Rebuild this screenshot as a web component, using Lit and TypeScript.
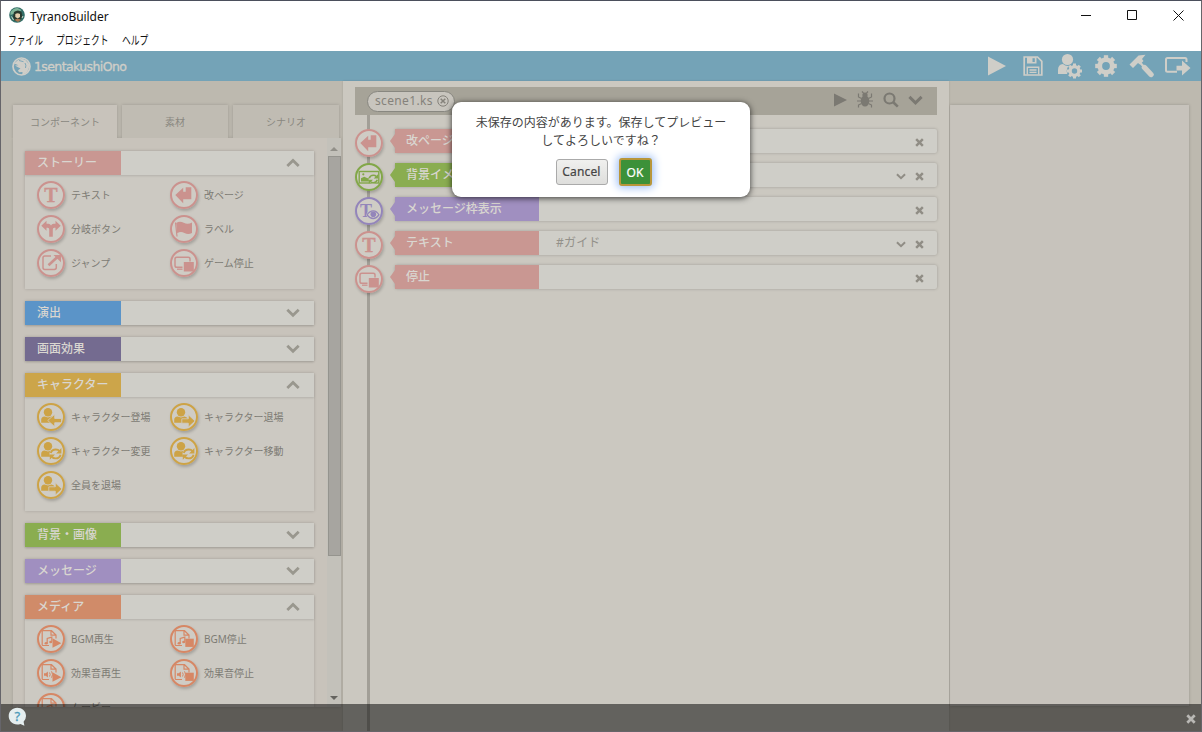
import { LitElement, html, css, svg, nothing } from "lit";
import { customElement, property } from "lit/decorators.js";
import { classMap } from "lit/directives/class-map.js";

const person = svg`<circle cx="11" cy="9.2" r="4.2" fill="currentColor"/><path d="M4.2 19.8v-3q0-3 3.4-3.4l3.4 1.2 3.4-1.2q2.600.3 3.200 2.200v4.200z" fill="currentColor"/>`;
const paper = svg`<path d="M12 20.500H6q-.8 0-.8-.8V6.500q0-.8.8-.8h8.500l4.500 4.300v3.500M14 5.700v4.500h5" fill="none" stroke="currentColor" stroke-width="1.200"/>`;
const note = svg`<path d="M10.200 18.300v-4.800l4.600-1.400v4.500" fill="none" stroke="currentColor" stroke-width="1.200"/><ellipse cx="9.200" cy="18.300" rx="1.600" ry="1.300" fill="currentColor"/><ellipse cx="13.700" cy="17" rx="1.500" ry="1.200" fill="currentColor"/>`;
const speaker = svg`<path d="M7 14.200h1.700l2.200-1.800v6.200l-2.200-1.800H7z" fill="currentColor"/><path d="M12.500 13.500q1.400 2 0 4M14.500 12.300q2.200 3.200 0 6.400" fill="none" stroke="currentColor" stroke-width="1"/>`;
const playMark = svg`<path d="M15.500 13.300l8.800 4.900-8.800 4.600z" fill="currentColor"/>`;
const stopMark = svg`<path d="M15.300 13.700h8.500v8.200h-8.500z" fill="currentColor"/>`;
const cycle = svg`<circle cx="18.500" cy="16.800" r="6" fill="var(--disc)"/><path d="M13.800 16q1-3.500 5-3.500 2.500 0 3.800 1.800M23.600 17.700q-1 3.700-5 3.700-2.500 0-3.800-1.800" fill="none" stroke="currentColor" stroke-width="1.900"/><path d="M24.400 11v5.400h-5.300zM12.800 22.700v-5.300h5.200z" fill="currentColor"/>`;

const glyphs: Record<string, unknown> = {
  text: svg`<text x="14" y="20.600" text-anchor="middle" font-family="Liberation Serif, serif" font-weight="bold" font-size="20" fill="currentColor" stroke="currentColor" stroke-width=".4">T</text>`,
  enter: svg`<path d="M5.300 14l7.900-7.300v4h2.500V6.300h5.600v12h-8.100v4z" fill="currentColor"/>`,
  branch: svg`<path d="M4.300 10.800l5.200-5v3h2q1.700 0 2.500 1.600.8-1.600 2.500-1.600h2v-3l5.200 5-5.200 5v-3h-1.300q-1.400 0-1.400 1.600v7.300h-3.600v-7.300q0-1.600-1.400-1.600H9.500v3z" fill="currentColor"/>`,
  flag: svg`<path d="M5.500 7.500l1.500 14" stroke="currentColor" stroke-width="1.200"/><path d="M6.200 8q3.500-2.500 7.500-.3t8.300-.2V18q-3.800 2-7.600 0T7.200 18.300z" fill="currentColor"/>`,
  jump: svg`<path d="M14 7H7.800Q6 7 6 8.800v9.700q0 2 1.900 2h9.400q2 0 2-1.900V15" fill="none" stroke="currentColor" stroke-width="1.500"/><path d="M11.500 16.200L20.400 8" stroke="currentColor" stroke-width="2.600"/><path d="M16.500 6H24v7.300z" fill="currentColor"/>`,
  halt: svg`<path d="M12.500 18.300H6.800q-1.800 0-1.800-1.800V10q0-1.700 1.800-1.700h11.400Q20 8.300 20 10v2.500" fill="none" stroke="currentColor" stroke-width="1.500"/><path d="M7 20.200h5.500" stroke="currentColor" stroke-width="1.300"/><path d="M13.800 13h10v9.500h-10z" fill="currentColor"/>`,
  enterChar: svg`${person}<path d="M10.700 17.500l7-6.200v4.200h6.800v4.200h-6.800v4z" fill="currentColor" stroke="var(--disc)" stroke-width=".8"/>`,
  leaveChar: svg`${person}<path d="M25 18l-6.700-6.200v4h-6.500v4.400h6.500v4z" fill="currentColor" stroke="var(--disc)" stroke-width=".8"/>`,
  swapChar: svg`${person}${cycle}`,
  bgmPlay: svg`${paper}${note}${playMark}`,
  bgmStop: svg`${paper}${note}${stopMark}`,
  sePlay: svg`${paper}${speaker}${playMark}`,
  seStop: svg`${paper}${speaker}${stopMark}`,
  image: svg`<rect x="4.200" y="8.500" width="19.600" height="11.500" fill="none" stroke="currentColor" stroke-width="1.400"/><path d="M6 18.500v-3.300l3.200-1.500 3.400 1.500 1.900-1v4.300z" fill="currentColor"/><circle cx="8.300" cy="11.300" r="1.100" fill="currentColor"/><circle cx="18.300" cy="16" r="4.700" fill="var(--disc)"/><path d="M14.300 15.300q.8-3 4-3 2 0 3 1.200M22.300 16.800q-.8 3-4 3-2 0-3-1.200" fill="none" stroke="currentColor" stroke-width="1.500"/><path d="M23 11.300v4.300h-4.300zM13.800 20.800v-4.100h4.200z" fill="currentColor"/>`,
  frame: svg`<text x="11" y="19.600" text-anchor="middle" font-family="Liberation Serif, serif" font-weight="bold" font-size="18" fill="currentColor">T</text><path d="M10.800 18q3-5.200 7.200-5.200t7 5.200q-2.800 4.500-7 4.500T10.800 18z" fill="var(--disc)"/><path d="M12 17.800q2.700-4 6.200-4t5.700 4q-2.500 3.700-5.700 3.700t-6.200-3.700z" fill="none" stroke="currentColor" stroke-width="1.300"/><circle cx="18.300" cy="17.200" r="2.800" fill="currentColor"/>`,
};

const gearPath = (cx: number, cy: number, r: number) => svg`<circle cx=${cx} cy=${cy} r=${r * 0.58} fill="none" stroke="currentColor" stroke-width=${r * 0.44}/>
  ${[0, 45, 90, 135, 180, 225, 270, 315].map((a) => svg`<rect x=${cx - r * 0.2} y=${cy - r} width=${r * 0.4} height=${r * 0.34} fill="currentColor" transform="rotate(${a} ${cx} ${cy})"/>`)}`;

@customElement("disc-icon")
class DiscIcon extends LitElement {
  @property() name = "text";
  static styles = css`
    :host { display: block; width: 28px; height: 28px; border-radius: 50%; flex: none; box-shadow: 1px 2px 3px rgba(0,0,0,.2); --disc: #cfccc5; }
    svg { display: block; width: 28px; height: 28px; }
  `;
  render() {
    return html`<svg viewBox="0 0 28 28"><circle cx="14" cy="14" r="13" fill="var(--disc)" stroke="currentColor" stroke-width="2"/>${glyphs[this.name]}</svg>`;
  }
}

@customElement("chevron-mark")
class ChevronMark extends LitElement {
  @property({ type: Boolean }) up = false;
  @property({ type: Number }) size = 14;
  static styles = css`:host { display: block; } svg { display: block; }`;
  render() {
    return html`<svg width=${this.size} height=${this.size * 0.7} viewBox="0 0 14 10"><path d=${this.up ? "M1.200 8.200L7 2.500l5.800 5.700" : "M1.200 1.800L7 7.500l5.800-5.700"} fill="none" stroke="currentColor" stroke-width="2.800"/></svg>`;
  }
}

const groups = [
  { name: "ストーリー", tone: "pink", items: [["text", "テキスト"], ["enter", "改ページ"], ["branch", "分岐ボタン"], ["flag", "ラベル"], ["jump", "ジャンプ"], ["halt", "ゲーム停止"]] },
  { name: "演出", tone: "blue", items: [] },
  { name: "画面効果", tone: "indigo", items: [] },
  { name: "キャラクター", tone: "gold", items: [["enterChar", "キャラクター登場"], ["leaveChar", "キャラクター退場"], ["swapChar", "キャラクター変更"], ["swapChar", "キャラクター移動"], ["leaveChar", "全員を退場"]] },
  { name: "背景・画像", tone: "green", items: [] },
  { name: "メッセージ", tone: "violet", items: [] },
  { name: "メディア", tone: "orange", items: [["bgmPlay", "BGM再生"], ["bgmStop", "BGM停止"], ["sePlay", "効果音再生"], ["seStop", "効果音停止"], ["bgmPlay", "ムービー"]] },
];

const steps = [
  { icon: "enter", name: "改ページ", tone: "pink", note: "", more: false },
  { icon: "image", name: "背景イメージ", tone: "green", note: "", more: true },
  { icon: "frame", name: "メッセージ枠表示", tone: "violet", note: "", more: false },
  { icon: "text", name: "テキスト", tone: "pink", note: "#ガイド", more: true },
  { icon: "halt", name: "停止", tone: "pink", note: "", more: false },
];

const cross = (s: number) => html`<svg width=${s} height=${s} viewBox="0 0 10 10"><path d="M1.300 1.300l7.400 7.400M8.700 1.300L1.300 8.700" stroke="currentColor" stroke-width="2.700"/></svg>`;

@customElement("app-root")
class AppRoot extends LitElement {
  static styles = css`
    :host { display: block; width: 1202px; height: 732px; overflow: hidden; font-family: "Noto Sans", "Noto Sans CJK JP", sans-serif; }
    * { box-sizing: border-box; }
    .window { position: relative; width: 1202px; height: 732px; border: 1px solid #66656a; border-top-color: #4b4f5c; display: flex; flex-direction: column; background: #bdb9af; overflow: hidden; }
    svg { display: block; flex: none; }
    .title { height: 29px; background: #fff; display: flex; align-items: center; padding-left: 8px; flex: none; color: #111; }
    .title svg { margin-bottom: 1px; }
    .title .name { font-size: 12px; margin-left: 5px; letter-spacing: -.05px; flex: 1; padding-top: 1px; }
    .controls { display: flex; }
    .controls span { width: 46px; display: flex; justify-content: center; align-items: center; }
    .menu { height: 21px; background: #fff; display: flex; flex: none; padding-left: 7px; font: 12px/20px "Noto Sans CJK JP", sans-serif; color: #111; }
    .menu span { width: 48px; white-space: nowrap; }
    .menu span:nth-child(2) { width: 66px; }
    .menu b { display: inline-block; font-weight: 400; transform: scaleX(.73); transform-origin: 0 50%; }
    .head { height: 30px; background: #74a3b7; color: #cfcec8; display: flex; align-items: center; flex: none; padding: 0 5px 0 11px; }
    .head .project { font: 500 12.5px "DejaVu Sans", sans-serif; -webkit-text-stroke: .35px; flex: 1; margin-left: 3px; letter-spacing: -.6px; }
    .head .tool { width: 36.2px; display: flex; justify-content: center; }
    .main { flex: 1; min-height: 0; display: flex; }
    .side { width: 342px; padding: 24px 2px 24px 12px; display: flex; flex-direction: column; }
    .tabs { display: flex; gap: 5px; height: 33px; flex: none; font: 10px/33px "Noto Sans CJK JP", sans-serif; color: #8a8881; text-align: center; }
    .tabs span { width: 106px; background: #c0bcb3; box-shadow: 0 0 3px rgba(0,0,0,.18); clip-path: inset(-4px -4px 0 -4px); }
    .tabs .on { width: 104px; background: #c8c3bb; }
    .panel { flex: 1; min-height: 0; background: #c8c3bb; display: flex; box-shadow: 0 0 3px rgba(0,0,0,.15); }
    .groups { width: 314px; padding: 13px 13px 0 12px; display: flex; flex-direction: column; gap: 12px; overflow: hidden; }
    .group { box-shadow: 0 0 3px rgba(0,0,0,.17); background: #ccc9c2; flex: none; }
    .bar { height: 24px; display: flex; align-items: center; background: #cfcec8; box-shadow: 0 1px 2px rgba(0,0,0,.12); color: #99978e; }
    .bar .label { width: 96px; height: 24px; }
    .bar chevron-mark { margin: 0 14px 0 auto; }
    .label { padding-left: 12px; color: #d9d6d0; font: 500 12px/22px "Noto Sans CJK JP", sans-serif; }
    .items { height: 114px; padding: 3px 0 0 12px; display: grid; grid-template-columns: 133px 133px; grid-auto-rows: 34px; overflow: hidden; }
    .item { display: flex; align-items: center; gap: 6px; font: 10px/14px "Noto Sans", "Noto Sans CJK JP", sans-serif; white-space: nowrap; }
    .item span { color: #7d7b74; }
    .scroll { width: 14px; display: flex; flex-direction: column; background: #c3c1ba; align-items: center; }
    .up { width: 0; border: 4px solid transparent; border-top: 0; border-bottom: 4px solid #929089; margin: 9px 0 5px; }
    .thumb { width: 13px; height: 400px; background: #a7a5a0; border: 1px solid #95948e; }
    .down { width: 0; border: 4px solid transparent; border-bottom: 0; border-top: 4px solid #65645f; margin-top: 140px; }
    .center { width: 606px; background: #cbc8c0; padding: 6px 12px 0; display: flex; flex-direction: column; box-shadow: 0 0 2px rgba(0,0,0,.14); z-index: 1; }
    .filebar { height: 28px; background: #a6a398; display: flex; align-items: center; padding: 0 14px 0 12px; color: #7b7972; flex: none; }
    .file { height: 21px; width: 88px; border: 1.5px solid #888780; background: #c8c5be; border-radius: 11px; display: flex; align-items: center; padding: 0 5px 1px 7px; font: 12px "Noto Sans", sans-serif; margin-right: auto; justify-content: space-between; letter-spacing: .35px; white-space: nowrap; color: #85827b; }
    .acts { display: flex; align-items: center; gap: 9px; padding-bottom: 2px; }
    .flow { flex: 1; background: linear-gradient(#a29f97, #a29f97) 12px 0 / 3px 100% no-repeat; padding-top: 14px; display: flex; flex-direction: column; gap: 10px; }
    .step { display: flex; height: 24px; flex: none; }
    .arrow { width: 5px; height: 14px; margin: 5px 0 0 7px; clip-path: polygon(0 50%, 100% 0, 100% 100%); }
    .body { width: 542px; height: 24px; background: #cfcec8; display: flex; align-items: center; border-radius: 2px; box-shadow: 0 0 3px rgba(0,0,0,.23); color: #908d85; padding-right: 13px; gap: 9px; }
    .body .label { width: 144px; height: 24px; padding-left: 11px; }
    .body svg, .body chevron-mark { margin-top: 2px; }
    .note { flex: 1; padding-left: 8px; font: 12px/22px "Noto Sans", "Noto Sans CJK JP", sans-serif; color: #93918a; letter-spacing: .2px; }
    .stage { flex: 1; padding: 24px 12px 0 1px; display: flex; }
    .preview { flex: 1; height: 601px; background: #c7c3bc; box-shadow: 0 0 3px rgba(0,0,0,.2); }
    .pink { background: #c99792; } .blue { background: #5b94c8; } .indigo { background: #746b90; } .gold { background: #cca54a; } .green { background: #8aad50; } .violet { background: #a08fc0; } .orange { background: #d08b69; }
    .t-pink { color: #cb928e; } .t-gold { color: #cda346; } .t-orange { color: #d68765; } .t-green { color: #82a748; } .t-violet { color: #9385ba; }
    .status { position: absolute; left: 0; right: 0; bottom: 0; height: 27px; background: rgba(0,0,0,.51); display: flex; align-items: center; justify-content: space-between; padding: 0 5px 2px 7px; color: #b9b8b4; z-index: 2; }
    .status .x { padding-top: 4px; }
    .dialog { position: absolute; left: 451px; top: 101px; width: 298px; height: 95px; border-radius: 9px; background: #fff; box-shadow: 0 1px 6px rgba(0,0,0,.75); z-index: 3; padding: 11px 20px 0; text-align: center; font: 12px/18px "Noto Sans CJK JP", sans-serif; color: #444; white-space: nowrap; }
    .buttons { display: flex; justify-content: center; gap: 11px; margin-top: 10px; padding-left: 5px; }
    .btn { font: 12px/24px "Noto Sans", sans-serif; height: 26px; border-radius: 3px; border: 1px solid #aaa; background: linear-gradient(#f0f0ee, #dededc); color: #444; width: 52px; padding: 0; -webkit-text-stroke: .2px; letter-spacing: .15px; }
    .ok { width: 33px; border: 2px solid #b8963a; background: #3c9139; color: #fff; box-shadow: 0 0 8px 2px #9fc0f5; height: 28px; line-height: 23px; margin-top: -1px; }
  `;

  private group(g: any) {
    const open = g.items.length > 0;
    return html`<section class="group">
      <div class="bar"><div class="label ${g.tone}">${g.name}</div><chevron-mark .up=${open} .size=${14}></chevron-mark></div>
      ${open ? html`<div class="items">${g.items.map(([icon, name]: string[]) => html`<div class="item t-${g.tone}"><disc-icon name=${icon}></disc-icon><span>${name}</span></div>`)}</div>` : nothing}
    </section>`;
  }

  private step(s: any) {
    return html`<div class="step t-${s.tone}"><disc-icon name=${s.icon}></disc-icon><div class="arrow ${s.tone}"></div>
      <div class="body"><div class="label ${s.tone}">${s.name}</div><div class="note">${s.note}</div>
      ${s.more ? html`<chevron-mark .size=${10}></chevron-mark>` : nothing}${cross(9)}</div></div>`;
  }

  render() {
    return html`<div class="window">
      <div class="title">
        <svg width="16" height="16" viewBox="0 0 16 16"><circle cx="8" cy="8" r="7.800" fill="#326d67"/><path d="M1.500 5q3-4 7-4l4 2-2 2-3-1-3 3-3 1z" fill="#7fb59a"/><path d="M5 5q4-3 7.500 0l1 5-3 4H6L4 10z" fill="#29382d"/><path d="M6.300 7q2.500-1.500 4.700 0v3l-2.300 1.500L6.300 10z" fill="#e4cfae"/><path d="M5.500 13q3-2.500 6.500 0l-3 2z" fill="#a8764f"/><path d="M2.500 9.500l2 3.500M13 11l1-2" stroke="#cde1d3"/></svg>
        <span class="name">TyranoBuilder</span>
        <div class="controls">
          <span><svg width="10" height="10"><path d="M0 5.500h10" stroke="#111"/></svg></span>
          <span><svg width="10" height="10"><path d="M.5.5h9v9h-9z" fill="none" stroke="#111"/></svg></span>
          <span><svg width="11" height="11"><path d="M.5.5l10 10M10.500.5l-10 10" stroke="#111"/></svg></span>
        </div>
      </div>
      <nav class="menu"><span><b>ファイル</b></span><span><b>プロジェクト</b></span><span><b>ヘルプ</b></span></nav>
      <header class="head">
        <svg width="19" height="19" viewBox="0 0 19 19"><circle cx="9.500" cy="9.500" r="8.500" fill="none" stroke="currentColor" stroke-width="1.700"/><path d="M2 6.500l4-3.500q4-2 7.500 0l3.500 4q.8 6-3.500 9.500L9 18q2-1 1.500-3l-3.500.2-1-2 2.500-1.700-3-1.500L3 8.500l3.500-.3z" fill="currentColor"/><path d="M7 3.500l4.500 1.200M13 6q1.500 2 .5 5" stroke="#74a3b7" stroke-width=".9" fill="none"/></svg>
        <span class="project">1sentakushiOno</span>
        <span class="tool"><svg width="18" height="20"><path d="M0 .5v19L18 10z" fill="currentColor"/></svg></span>
        <span class="tool"><svg width="20" height="20" viewBox="0 0 20 20"><path d="M1.200 1h13.300l4.300 4.300V19H1.200z" fill="none" stroke="currentColor" stroke-width="1.700"/><path d="M4 1h9.500v6.500H4z" fill="currentColor"/><path d="M9.500 2.200h2.300v3.800H9.500z" fill="#74a3b7"/><path d="M4.300 18.500v-7.200h11.400v7.200M6.500 14h7M6.500 16.400h7" fill="none" stroke="currentColor" stroke-width="1.400"/></svg></span>
        <span class="tool"><svg width="25" height="26" viewBox="0 0 25 26"><circle cx="10.500" cy="6.500" r="5.600" fill="currentColor"/><path d="M1 21v-4q0-5.500 5-6 4.500 4 9 0l4 2-6 8z" fill="currentColor"/><circle cx="17.500" cy="18" r="7.800" fill="#74a3b7"/>${gearPath(17.5, 18, 7.5)}</svg></span>
        <span class="tool"><svg width="22" height="22">${gearPath(11, 11, 10.8)}</svg></span>
        <span class="tool"><svg width="25" height="24" viewBox="0 0 25 24"><path d="M.5 10.500L9.500 1.500 16.500.8 13 5l1.500 2-3.500 3.500-2-1.500-5 5z" fill="currentColor"/><path d="M10.500 8l11.500 12.500" stroke="currentColor" stroke-width="2.400"/><path d="M15.500 13.500l6.500 7" stroke="currentColor" stroke-width="5.400" stroke-linecap="round"/></svg></span>
        <span class="tool"><svg width="26" height="20" viewBox="0 0 26 20"><path d="M12 15.700H2.500q-1.500 0-1.500-1.500V3.500Q1 2 2.500 2h17.500q1.500 0 1.500 1.500V6" fill="none" stroke="currentColor" stroke-width="2"/><path d="M11.500 9.800H17V4.500l8.500 7.500-8.500 7.500v-5h-5.500z" fill="currentColor"/></svg></span>
      </header>
      <div class="main">
        <aside class="side">
          <div class="tabs">${["コンポーネント", "素材", "シナリオ"].map((t, i) => html`<span class=${classMap({ on: i === 0 })}>${t}</span>`)}</div>
          <div class="panel"><div class="groups">${groups.map((g) => this.group(g))}</div>
          <div class="scroll"><i class="up"></i><i class="thumb"></i><i class="down"></i></div></div>
        </aside>
        <main class="center">
          <div class="filebar">
            <div class="file">scene1.ks<svg width="12" height="12" viewBox="0 0 12 12"><circle cx="6" cy="6" r="5.200" fill="none" stroke="currentColor"/><path d="M3.700 3.700l4.600 4.600M8.300 3.700L3.700 8.300" stroke="currentColor" stroke-width="1.500"/></svg></div>
            <div class="acts">
              <svg width="13" height="14"><path d="M0 .5v13L13 7z" fill="currentColor"/></svg>
              <svg width="18" height="18" viewBox="0 0 18 18"><ellipse cx="9" cy="10" rx="4.300" ry="5.500" fill="currentColor"/><circle cx="9" cy="4" r="2.600" fill="currentColor"/><path d="M5.500 7.500L2.500 6V2.500M12.500 7.500l3-1.500V2.500M5 10H1M13 10h4M5.500 12.500l-3 1.500v2.500M12.500 12.500l3 1.500v2.500M7.500 2L6 .5M10.500 2L12 .5" fill="none" stroke="currentColor" stroke-width="1.200"/></svg>
              <svg width="16" height="16" viewBox="0 0 16 16"><circle cx="6.500" cy="6.500" r="5" fill="none" stroke="currentColor" stroke-width="2.200"/><path d="M10 10l4.800 4.600" stroke="currentColor" stroke-width="2.600"/></svg>
              <chevron-mark .size=${15}></chevron-mark>
            </div>
          </div>
          <div class="flow">${steps.map((s) => this.step(s))}</div>
        </main>
        <section class="stage"><div class="preview"></div></section>
      </div>
      <footer class="status">
        <svg width="19" height="20" viewBox="0 0 19 20"><path d="M9.200.7C14 .7 18 4 18 8.900q0 3.400-2.400 5.800l.8 4-4-1.800q-1.500.5-3.200.5C4.300 17.400.7 13.700.7 9S4.300.7 9.200.7z" fill="#e5eeef"/><text x="9.300" y="13.800" text-anchor="middle" font-family="Noto Sans, sans-serif" font-size="13" fill="#4c9ab9" stroke="#4c9ab9" stroke-width=".3">?</text></svg>
        <span class="x">${cross(10)}</span>
      </footer>
      <div class="dialog">未保存の内容があります。保存してプレビュー<br>してよろしいですね？
        <div class="buttons"><button class="btn">Cancel</button><button class="btn ok">OK</button></div>
      </div>
    </div>`;
  }
}
